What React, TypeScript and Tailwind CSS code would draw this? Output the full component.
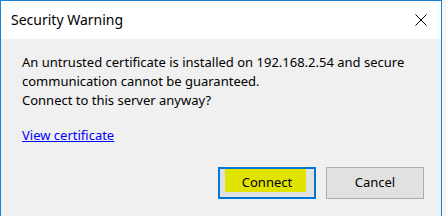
import { useState } from 'react';

const font = { fontFamily: '"Noto Sans", "Open Sans", Arial, sans-serif' };

function CloseIcon() {
    return (
        <svg width="12" height="12" viewBox="0 0 12 12" className="block">
            <path d="M0.5 0.5 L11.5 11.5 M11.5 0.5 L0.5 11.5" stroke="#000" strokeWidth="1" fill="none" />
        </svg>
    );
}

export default function App() {
    const [closed, setClosed] = useState(false);

    return (
        <div className="w-[446px] h-[216px] bg-[#f7f7f7] overflow-hidden" style={font}>
            <div className="w-[442px] h-[216px] flex flex-col border-l border-t border-r border-[#1883d7] bg-[#f0f0f0]">
                {/* Title bar */}
                <div className="h-[38px] flex-shrink-0 bg-white flex items-center justify-between pl-[10px] pr-[14px]">
                    <span className="text-[14px] text-black leading-none">Security Warning</span>
                    <button onClick={() => setClosed(!closed)} className="w-[12px] h-[12px]">
                        <CloseIcon />
                    </button>
                </div>

                {/* Body */}
                <div className="flex-1 flex flex-col px-[21px] pt-[14px]">
                    <p className="text-[13px] leading-[19px] text-black">
                        An untrusted certificate is installed on 192.168.2.54 and secure<br />
                        communication cannot be guaranteed.<br />
                        Connect to this server anyway?
                    </p>
                    <a href="#" className="mt-[16px] text-[13px] leading-[19px] text-[#0000ff] underline self-start">
                        View certificate
                    </a>

                    <div className="flex justify-end gap-[10px] mt-[22px] mr-[-4px]">
                        <button className="relative w-[98px] h-[32px] border-2 border-[#0078d7] bg-[#e1e1e1] text-[13px] text-black flex items-center justify-center">
                            <span className="absolute left-[5px] top-0 w-[81px] h-[23px] bg-[#e1e400]" />
                            <span className="relative">Connect</span>
                        </button>
                        <button className="w-[98px] h-[32px] border border-[#adadad] bg-[#e1e1e1] text-[13px] text-black flex items-center justify-center">
                            Cancel
                        </button>
                    </div>
                </div>
            </div>
        </div>
    );
}
